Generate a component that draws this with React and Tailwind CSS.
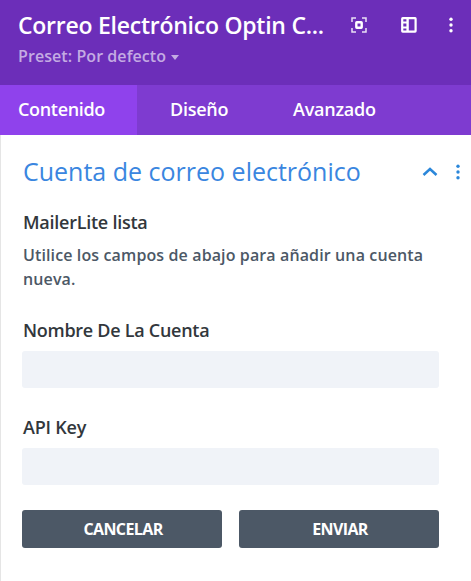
import React from "react";

function Field({ label, className, tracking }) {
  return (
    <label className={`block ${className}`}>
      <span className={`ml-px block whitespace-nowrap text-[18px] leading-[24px] font-semibold text-[#32373c] ${tracking}`}>{label}</span>
      <input className="mt-[9px] block h-[37px] w-[417px] rounded-[3px] bg-[#f0f3f8] px-3 outline-none" />
    </label>
  );
}

function Dots({ className }) {
  return (
    <svg className={`h-[16px] w-[6px] ${className}`} viewBox="0 0 6 16" fill="currentColor">
      <circle cx="3" cy="2.2" r="1.7" /><circle cx="3" cy="8" r="1.7" /><circle cx="3" cy="13.8" r="1.7" />
    </svg>
  );
}

export default function App() {
  return (
    <div className="flex h-[581px] w-[471px] flex-col overflow-hidden bg-white font-['Open_Sans',sans-serif]">
      <header className="h-[85px] bg-[#6c2eb9] pl-[18px] text-white">
        <div className="flex h-[49px] items-center">
          <h1 className="w-[333px] whitespace-nowrap text-[23px] leading-[32px] font-semibold tracking-[-0.25px]">Correo Electrónico Optin C...</h1>
          <svg className="h-[16px] w-[16px]" viewBox="0 0 16 16" fill="none" stroke="white">
            <path d="M1 5V1h4M11 1h4v4M15 11v4h-4M5 15H1v-4" strokeWidth="1.5" strokeOpacity="0.85" />
            <rect x="5.3" y="5.3" width="5.4" height="5.4" rx="0.5" strokeWidth="2.4" />
          </svg>
          <svg className="ml-[34px] h-[16px] w-[16px]" viewBox="0 0 16 16" fill="none" stroke="white">
            <rect x="1.2" y="1.2" width="13.4" height="13.4" rx="0.5" strokeWidth="2.2" />
            <path d="M6.6 1v14" strokeWidth="2.4" />
            <path d="M1 5.5h5M1 10.5h5" strokeWidth="1.8" />
          </svg>
          <Dots className="ml-[31px]" />
        </div>
        <div className="flex items-center text-[16px] leading-[14px] font-semibold tracking-[0.07px] text-[#c4abe3]">Preset: Por defecto
          <svg className="ml-[5px] mt-[2px] h-[5px] w-[8px]" viewBox="0 0 8 5" fill="currentColor"><path d="M0 0h8L4 5z" /></svg>
        </div>
      </header>
      <nav className="flex h-[50px] items-center bg-[#7e3bd0] pb-px text-[18px] font-semibold tracking-[-0.25px] text-white">
        <span className="-mb-px flex h-[50px] w-[137px] items-center bg-[#8f42ec] pb-px pl-[18px] tracking-[-0.33px]">Contenido</span>
        <span className="ml-[33px] w-[123px]">Diseño</span>
        <span>Avanzado</span>
      </nav>
      <main className="flex-1 border-l border-[#e5e5e5] pl-[21px]">
        <div className="flex h-[75px] items-center pl-px pb-px">
          <h2 className="w-[399px] whitespace-nowrap text-[25px] text-[#3a86e0]">Cuenta de correo electrónico</h2>
          <svg className="h-[10px] w-[16px]" viewBox="0 0 16 10" fill="none" stroke="#2b87da" strokeWidth="2.5"><path d="M1.5 8L8 2l6.5 6" /></svg>
          <Dots className="ml-[17px] text-[#2b87da]" />
        </div>
        <h3 className="ml-px text-[18px] leading-[24px] font-semibold tracking-[-0.25px] text-[#32373c]">MailerLite lista</h3>
        <p className="ml-px mt-[9px] whitespace-nowrap text-[16px] leading-[24px] font-semibold tracking-[0.12px] text-[#4c5866]">Utilice los campos de abajo para añadir una cuenta<br />nueva.</p>
        <Field label="Nombre De La Cuenta" className="mt-[27px]" tracking="tracking-[-0.28px]" />
        <Field label="API Key" className="mt-[27px]" tracking="tracking-[-0.2px]" />
        <div className="mt-[25px] flex gap-[17px] text-[16px] font-bold tracking-[-0.6px] text-white">
          <button className="h-[38px] w-[200px] rounded-[3px] bg-[#4c5866] pl-[2px]">CANCELAR</button>
          <button className="h-[38px] w-[200px] rounded-[3px] bg-[#4c5866] pl-[2px]">ENVIAR</button>
        </div>
      </main>
    </div>
  );
}
